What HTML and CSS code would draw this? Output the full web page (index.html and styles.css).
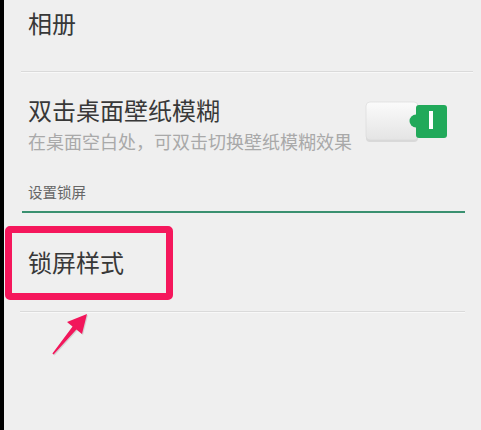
FILE: index.html
```html
<!DOCTYPE html>
<html lang="zh-CN">
<head>
    <meta charset="UTF-8">
    <meta name="viewport" content="width=device-width, initial-scale=1.0">
    <title>桌面设置</title>
    <link rel="stylesheet" href="styles.css">
</head>
<body>
    <div class="screen">
        <div class="edge"></div>
        <div class="main">
            <div class="item first">
                <div class="title">相册</div>
            </div>
            <div class="divider"></div>

            <div class="item switch-row">
                <div class="texts">
                    <div class="title">双击桌面壁纸模糊</div>
                    <div class="summary">在桌面空白处，可双击切换壁纸模糊效果</div>
                </div>
                <svg class="toggle" width="84" height="42" viewBox="0 0 84 42">
                    <defs>
                        <linearGradient id="knob" x1="0" y1="0" x2="0" y2="1">
                            <stop offset="0" stop-color="#fbfbfb"/>
                            <stop offset="1" stop-color="#e4e4e4"/>
                        </linearGradient>
                    </defs>
                    <rect x="1" y="2" width="52" height="39" rx="4" fill="#c9c9c9" opacity="0.6"/>
                    <rect x="1" y="1" width="52" height="38" rx="4" fill="url(#knob)" stroke="#d6d6d6" stroke-width="0.6"/>
                    <rect x="51" y="4" width="31" height="33" rx="3" fill="#21a95a"/>
                    <circle cx="51" cy="20" r="6.5" fill="#21a95a"/>
                    <rect x="64" y="10" width="4" height="18" fill="#ffffff"/>
                </svg>
            </div>

            <div class="section">设置锁屏</div>

            <div class="item lock-row">
                <div class="title">锁屏样式</div>
            </div>
            <div class="divider short"></div>
        </div>

        <!-- Markierung aus dem Screenshot -->
        <div class="mark-box"></div>
        <svg class="mark-arrow" width="60" height="60" viewBox="0 0 60 60">
            <polygon points="48,10 43,30 37.4,25.6 14.6,50.5 13.4,49.5 33.6,22.4 28,18" fill="#9e9e9e" opacity="0.35"/>
            <polygon points="47,9 42,29 36.4,24.6 13.6,49.5 12.4,48.5 32.6,21.4 27,17" fill="#f2165b"/>
        </svg>
    </div>
</body>
</html>
```

FILE: styles.css
```css
body {
    margin: 0;
    font-family: "Noto Sans CJK SC", "Noto Sans", sans-serif;
    background-color: #efefef;
}
.screen {
    position: relative;
    display: flex;
    height: 430px;
    overflow: hidden;
}
.edge {
    width: 4px;
    background: #000;
}
.main {
    flex: 1;
    background: #efefef;
}
.item {
    padding-left: 24px;
}
.title {
    font-size: 24px;
    line-height: 30px;
    color: #383838;
}
.first {
    height: 63px;
    padding-top: 8px;
}
.divider {
    height: 1px;
    background: #dadada;
    border-bottom: 1px solid #f8f8f8;
    margin: 0 8px 0 17px;
}
.divider.short {
    margin: 0 16px 0 16px;
}
.switch-row {
    display: flex;
    align-items: flex-start;
    justify-content: space-between;
    padding-top: 22px;
    height: 65px;
}
.summary {
    margin-top: 5px;
    font-size: 18px;
    line-height: 22px;
    color: #a9a9a9;
}
.toggle {
    margin-top: 6px;
    margin-right: 32px;
}
.section {
    margin: 22px 16px 0 18px;
    padding: 0 0 9px 6px;
    font-size: 14.5px;
    line-height: 20px;
    color: #666;
    border-bottom: 2px solid #3a9070;
}
.lock-row {
    padding-top: 34px;
    height: 64px;
}
.mark-box {
    position: absolute;
    left: 5px;
    top: 226px;
    width: 154px;
    height: 60px;
    border: 7px solid #f5175c;
    border-radius: 5px;
}
.mark-arrow {
    position: absolute;
    left: 40px;
    top: 305px;
}
```
